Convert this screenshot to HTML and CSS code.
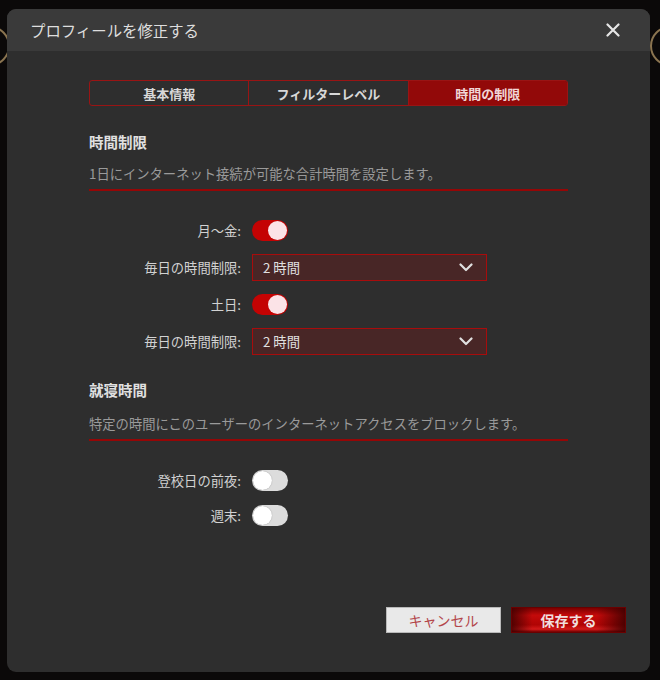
FILE: index.html
```html
<!DOCTYPE html>
<html lang="ja">
<head>
<meta charset="utf-8">
<link rel="stylesheet" href="styles.css">
</head>
<body>
<div class="bg-ring ring-left"></div>
<div class="bg-ring ring-right"></div>
<div class="modal">
  <div class="modal-header">
    <div class="modal-title">プロフィールを修正する</div>
    <svg class="close" width="14" height="14" viewBox="0 0 14 14"><path d="M1.5 1.5 L12.5 12.5 M12.5 1.5 L1.5 12.5" stroke="#e6e6e6" stroke-width="2.2" stroke-linecap="round"/></svg>
  </div>
  <div class="modal-body">
    <div class="tabs">
      <div class="tab">基本情報</div>
      <div class="tab">フィルターレベル</div>
      <div class="tab active">時間の制限</div>
    </div>

    <div class="section-title first">時間制限</div>
    <div class="section-desc">1日にインターネット接続が可能な合計時間を設定します。</div>

    <div class="form-grid grid1">
      <div class="label">月～金:</div>
      <div class="toggle on"><span class="knob"></span></div>
      <div class="label">毎日の時間制限:</div>
      <div class="select"><span>2 時間</span><svg width="14" height="9" viewBox="0 0 14 9"><path d="M1.5 1.5 L7 7 L12.5 1.5" fill="none" stroke="#e0e0e0" stroke-width="2.2" stroke-linecap="round" stroke-linejoin="round"/></svg></div>
      <div class="label">土日:</div>
      <div class="toggle on"><span class="knob"></span></div>
      <div class="label">毎日の時間制限:</div>
      <div class="select"><span>2 時間</span><svg width="14" height="9" viewBox="0 0 14 9"><path d="M1.5 1.5 L7 7 L12.5 1.5" fill="none" stroke="#e0e0e0" stroke-width="2.2" stroke-linecap="round" stroke-linejoin="round"/></svg></div>
    </div>

    <div class="section-title second">就寝時間</div>
    <div class="section-desc desc2">特定の時間にこのユーザーのインターネットアクセスをブロックします。</div>

    <div class="form-grid grid2">
      <div class="label">登校日の前夜:</div>
      <div class="toggle"><span class="knob"></span></div>
      <div class="label">週末:</div>
      <div class="toggle"><span class="knob"></span></div>
    </div>
  </div>
  <div class="modal-footer">
    <button class="btn cancel">キャンセル</button>
    <button class="btn save">保存する</button>
  </div>
</div>
</body>
</html>
```

FILE: styles.css
```css
* { box-sizing: border-box; }
html, body { margin: 0; padding: 0; }
body {
  width: 660px;
  height: 680px;
  background: #0b0909;
  font-family: "Noto Sans CJK JP", "Noto Sans", sans-serif;
  color: #dcdcdc;
  position: relative;
  overflow: hidden;
  padding-top: 9px;
  padding-left: 7px;
}
.bg-ring {
  position: absolute;
  width: 40px;
  height: 40px;
  border: 2px solid #8a7450;
  border-radius: 50%;
  top: 26px;
}
.ring-left { left: -30px; }
.ring-right { left: 650px; }

.modal {
  position: relative;
  width: 643px;
  height: 663px;
  background: #2e2e2e;
  border-radius: 9px;
  display: flex;
  flex-direction: column;
  overflow: hidden;
}
.modal-header {
  height: 42px;
  background: #3a3a3a;
  display: flex;
  align-items: center;
  justify-content: space-between;
  padding: 0 30px 0 23px;
}
.modal-title {
  font-size: 15.4px;
  color: #dedede;
}
.close { display: block; }

.modal-body {
  flex: 1;
  padding: 29px 82px 0 82px;
}
.tabs {
  display: flex;
  height: 26px;
  border: 1px solid #991414;
  border-radius: 3px;
  overflow: hidden;
}
.tab {
  flex: 1;
  display: flex;
  align-items: center;
  justify-content: center;
  font-size: 13px;
  font-weight: bold;
  color: #d8d8d8;
  border-right: 1px solid #991414;
}
.tab:last-child { border-right: none; }
.tab.active {
  background: #920909;
  color: #f1d6d6;
}

.section-title {
  font-size: 14.5px;
  font-weight: bold;
  color: #e0e0e0;
  line-height: 20px;
}
.section-title.first { margin-top: 26px; }
.section-title.second { margin-top: 25px; }
.section-desc {
  margin-top: 12px;
  font-size: 13.3px;
  color: #9a9a9a;
  line-height: 20px;
  padding-bottom: 5px;
  border-bottom: 2px solid #950606;
}
.section-desc.desc2 { margin-top: 14px; }

.form-grid {
  display: grid;
  grid-template-columns: 152px 235px;
  column-gap: 11px;
  align-items: center;
}
.grid1 {
  margin-top: 29px;
  row-gap: 13px;
}
.grid2 {
  margin-top: 29px;
  row-gap: 14px;
}
.label {
  text-align: right;
  font-size: 13.3px;
  color: #d2d2d2;
  line-height: 20px;
}
.toggle {
  width: 36px;
  height: 21px;
  border-radius: 11px;
  background: #dcdcdc;
  position: relative;
}
.toggle .knob {
  position: absolute;
  top: 1px;
  left: 1px;
  width: 19px;
  height: 19px;
  border-radius: 50%;
  background: #ffffff;
  box-shadow: 0 0 1px rgba(0,0,0,0.4);
}
.toggle.on { background: #c40303; }
.toggle.on .knob {
  left: 16px;
  background: #fbe3e7;
  box-shadow: none;
}
.select {
  height: 27px;
  background: #482626;
  border: 1px solid #a80c0c;
  display: flex;
  align-items: center;
  justify-content: space-between;
  padding: 0 13px 0 10px;
  font-size: 13.3px;
  color: #e0e0e0;
}
.select svg { display: block; }

.modal-footer {
  display: flex;
  justify-content: flex-end;
  gap: 10px;
  padding: 0 24px 39px 0;
}
.btn {
  width: 115px;
  height: 26px;
  font-family: "Noto Sans CJK JP", "Noto Sans", sans-serif;
  font-size: 14px;
  padding: 0;
  cursor: pointer;
}
.btn.cancel {
  background: #e9e9e9;
  border: 1px solid #b9b9b9;
  color: #b3464a;
}
.btn.save {
  border: 1px solid #6a0000;
  color: #f0dede;
  font-weight: bold;
  background:
    linear-gradient(to right, rgba(60,0,0,0.8) 0%, rgba(60,0,0,0) 18%, rgba(60,0,0,0) 75%, rgba(60,0,0,0.85) 100%),
    linear-gradient(to bottom, #7c0000 0%, #c40a0a 30%, #b00404 70%, #d41a1a 88%, #6e0000 100%);
}
```
